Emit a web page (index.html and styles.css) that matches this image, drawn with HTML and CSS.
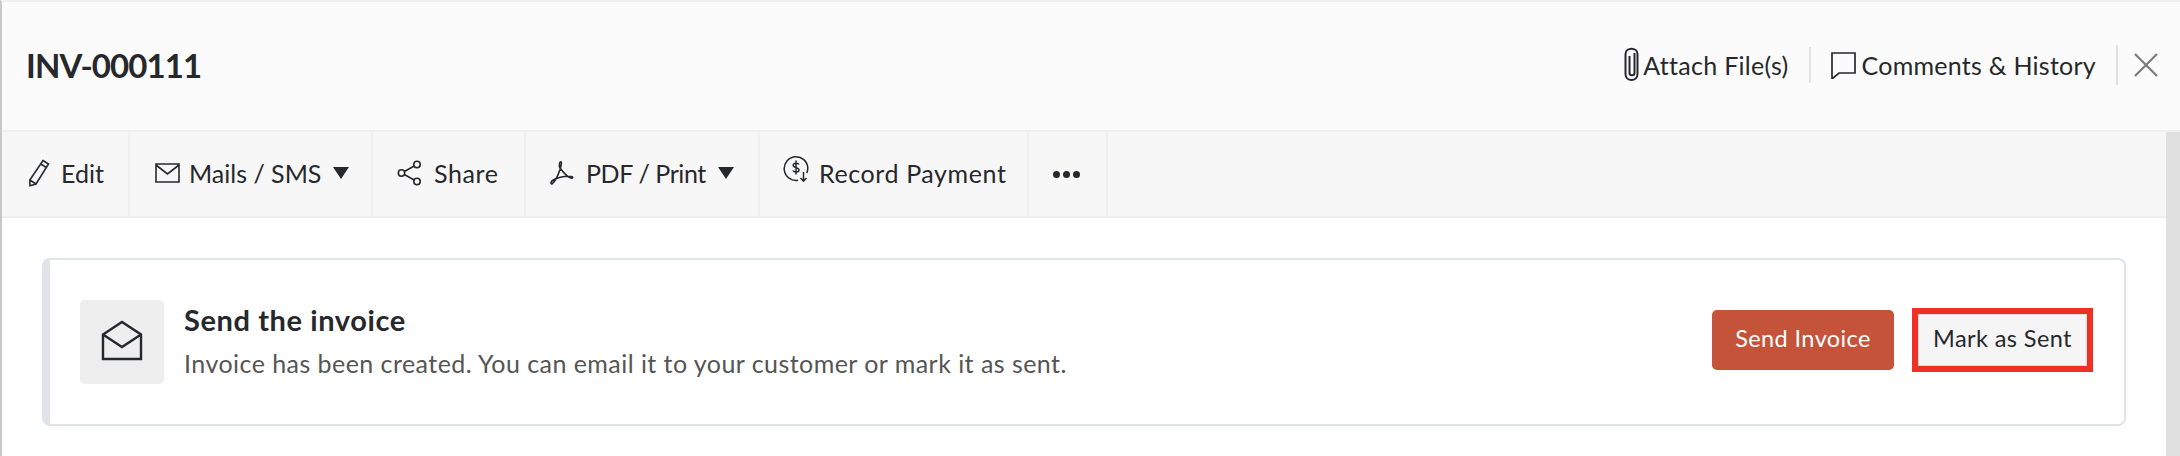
FILE: index.html
```html
<!DOCTYPE html>
<html lang="en">
<head>
    <meta charset="UTF-8">
    <title>INV-000111</title>
    <link rel="stylesheet" href="styles.css">
</head>
<body>
    <div class="panel">
        <header class="top-bar">
            <h1>INV-000111</h1>
            <div class="top-actions">
                <a class="top-link attach">
                    <svg width="16" height="36" viewBox="0 0 16 36" fill="none" stroke="#26282c" stroke-width="2"><path d="M5.5 9v17c0 3 5 3 5 0V6"/><path d="M13.500 9v18c0 8-12 8-12 0V7c0-7 12-7 12 0v3"/></svg>
                    <span>Attach File(s)</span>
                </a>
                <a class="top-link comments">
                    <svg width="25" height="28" viewBox="0 0 25 28" fill="none" stroke="#26282c" stroke-width="1.700"><path d="M1 2h23v20H8l-7 6z"/></svg>
                    <span>Comments &amp; History</span>
                </a>
                <a class="close-btn">
                    <svg width="24" height="24" viewBox="0 0 24 24" fill="none" stroke="#7b7b7b" stroke-width="2.200"><path d="M1 1l22 22M23 1L1 23"/></svg>
                </a>
            </div>
        </header>

        <div class="content-row">
            <div class="content">
                <nav class="toolbar">
                    <a class="tool tool-edit">
                        <svg width="22" height="28" viewBox="0 0 22 28" fill="none" stroke="#26282c" stroke-width="1.600"><path d="M15 1.500l5.500 3.500L8 25l-6 1.800L1.800 21zM12.800 5l5.500 3.500M1.800 21L8 25"/></svg>
                        <span>Edit</span>
                    </a>
                    <a class="tool tool-mails">
                        <svg width="25" height="20" viewBox="0 0 25 20" fill="none" stroke="#26282c" stroke-width="1.600"><path d="M1 1h23v18H1zM1 2l11.500 9L24 2"/></svg>
                        <span>Mails / SMS</span>
                        <i class="caret"></i>
                    </a>
                    <a class="tool tool-share">
                        <svg width="25" height="26" viewBox="0 0 25 26" fill="none" stroke="#26282c" stroke-width="1.600"><circle cx="4.500" cy="13" r="3.200"/><circle cx="20" cy="4.500" r="3.200"/><circle cx="20" cy="21.500" r="3.200"/><path d="M7.300 11.500l9.900-5.500M7.300 14.500l9.900 5.500"/></svg>
                        <span>Share</span>
                    </a>
                    <a class="tool tool-pdf">
                        <svg width="24" height="26" viewBox="0 0 24 26" fill="none" stroke="#26282c" stroke-width="1.600"><path d="M10 8c-1-2-.8-6 .6-6.200C12.300 1.600 11 6 10 9.500 8.500 14 5.500 21 2.500 23.500c-2 1.400-2-1.500 0-3 4-3 13-5 19-4 2 .5 1.500 2-.5 1.500-4-1-8-6-11-10"/></svg>
                        <span>PDF / Print</span>
                        <i class="caret"></i>
                    </a>
                    <a class="tool tool-payment">
                        <svg class="pay-icon" width="26" height="28" viewBox="0 0 26 28" fill="none" stroke="#26282c" stroke-width="1.500"><path d="M15 25.200A11.800 11.800 0 1 1 24.800 13c0 2-.4 3.500-1 5"/><path d="M16 9.500c-.8-1.500-5.500-2-5.800.8-.2 3 5.800 1.600 5.800 4.600 0 2.800-5 2.600-6 .6M13 5.500v14M20.500 17v9M17.500 23l3 3.200 3-3.200"/></svg>
                        <span>Record Payment</span>
                    </a>
                    <a class="tool tool-more">
                        <i class="dot"></i><i class="dot"></i><i class="dot"></i>
                    </a>
                </nav>

                <section class="notice">
                    <div class="notice-icon">
                        <svg class="envelope" width="42" height="42" viewBox="0 0 42 42" fill="none" stroke="#26282c" stroke-width="2.400"><path d="M2 14.500L21 2l19 12.500V39H2zM2 14.500L21 27l19-12.500"/></svg>
                    </div>
                    <div class="notice-text">
                        <h2>Send the invoice</h2>
                        <p>Invoice has been created. You can email it to your customer or mark it as sent.</p>
                    </div>
                    <div class="notice-actions">
                        <button class="btn-send">Send Invoice</button>
                        <button class="btn-mark">Mark as Sent</button>
                    </div>
                </section>
            </div>
            <div class="scrollbar"></div>
        </div>
    </div>
</body>
</html>
```

FILE: styles.css
```css
* {
    box-sizing: border-box;
}
html, body {
    margin: 0;
    padding: 0;
    height: 456px;
    overflow: hidden;
    background-color: white;
}
body {
    font-family: Lato, "Liberation Sans", sans-serif;
    color: #26282c;
}
.panel {
    height: 456px;
    border-left: 2px solid #c8c8c8;
    border-top: 2px solid #efefef;
    display: flex;
    flex-direction: column;
}
.top-bar {
    height: 130px;
    flex: none;
    background-color: #fbfbfb;
    border-bottom: 2px solid #efefef;
    display: flex;
    align-items: center;
    justify-content: space-between;
    padding: 0 22px 2px 24px;
}
h1 {
    margin: 0;
    font-size: 33px;
    font-weight: 700;
    letter-spacing: -.9px;
    color: #26282c;
}
.top-actions {
    display: flex;
    align-items: center;
}
.top-link {
    display: flex;
    align-items: center;
    font-size: 25px;
    letter-spacing: .3px;
    white-space: nowrap;
}
.attach {
    gap: 3px;
    padding-right: 20px;
    border-right: 2px solid #e4e4e4;
    height: 36px;
}
.comments {
    gap: 6px;
    padding: 0 20px 0 20px;
    letter-spacing: .25px;
}
.close-btn {
    display: flex;
    align-items: center;
    height: 40px;
    padding-left: 16px;
    border-left: 2px solid #e0e0e0;
}
.content-row {
    flex: 1;
    display: flex;
    min-height: 0;
}
.content {
    flex: 1;
    min-width: 0;
    background-color: white;
}
.scrollbar {
    width: 14px;
    flex: none;
    background-color: #e0e0e0;
}
.toolbar {
    height: 86px;
    background-color: #f7f7f7;
    border-bottom: 2px solid #efefef;
    display: flex;
}
.tool {
    display: flex;
    align-items: center;
    height: 100%;
    padding-bottom: 3px;
    font-size: 25px;
    white-space: nowrap;
    border-right: 2px solid #efefef;
}
.tool-edit {
    width: 128px;
    padding-left: 26px;
    gap: 11px;
}
.tool-mails {
    width: 243px;
    padding-left: 25px;
    gap: 9px;
}
.tool-mails .caret {
    margin-left: 3px;
}
.tool-share {
    width: 153px;
    padding-left: 24px;
    gap: 12px;
    letter-spacing: .6px;
}
.tool-pdf {
    width: 234px;
    padding-left: 24px;
    gap: 12px;
    letter-spacing: -.4px;
}
.tool-payment {
    width: 269px;
    padding-left: 23px;
    gap: 10px;
    letter-spacing: .6px;
}
.tool-more {
    width: 79px;
    padding-left: 24px;
    gap: 3px;
}
.pay-icon {
    margin-top: -8px;
}
.caret {
    width: 0;
    height: 0;
    border-left: 8px solid transparent;
    border-right: 8px solid transparent;
    border-top: 12px solid #26282c;
}
.dot {
    width: 7px;
    height: 7px;
    border-radius: 50%;
    background-color: #26282c;
    margin-top: 4px;
}
.notice {
    margin: 40px 40px 0 40px;
    height: 168px;
    border: 2px solid #e0e4e8;
    border-left-width: 8px;
    border-radius: 8px;
    display: flex;
    align-items: center;
    padding: 0 30px 0 30px;
}
.notice-icon {
    width: 84px;
    height: 84px;
    border-radius: 5px;
    background-color: #eeeeee;
    display: flex;
    align-items: center;
    justify-content: center;
    flex: none;
}
.envelope {
    margin-bottom: 3px;
}
.notice-text {
    flex: 1;
    padding: 0 0 3px 20px;
}
h2 {
    margin: 0 0 9px 0;
    font-size: 29px;
    font-weight: 700;
    letter-spacing: .6px;
    line-height: 36px;
}
.notice-text p {
    margin: 0;
    font-size: 25px;
    line-height: 32px;
    letter-spacing: .45px;
    color: #555555;
}
.notice-actions {
    display: flex;
    align-items: center;
    gap: 18px;
    padding-bottom: 4px;
    margin-right: 1px;
}
button {
    font-family: Lato, "Liberation Sans", sans-serif;
    font-size: 23.5px;
    letter-spacing: .4px;
    border-radius: 5px;
    cursor: pointer;
    padding: 0 0 4px 0;
}
.btn-send {
    width: 182px;
    height: 60px;
    border: none;
    background-color: #c4533a;
    color: white;
}
.btn-mark {
    width: 181px;
    height: 64px;
    border: 6px solid #ee3124;
    border-radius: 0;
    background-color: #f5f5f5;
    color: #26282c;
    box-shadow: inset 0 0 0 1px #dddddd;
}
```
